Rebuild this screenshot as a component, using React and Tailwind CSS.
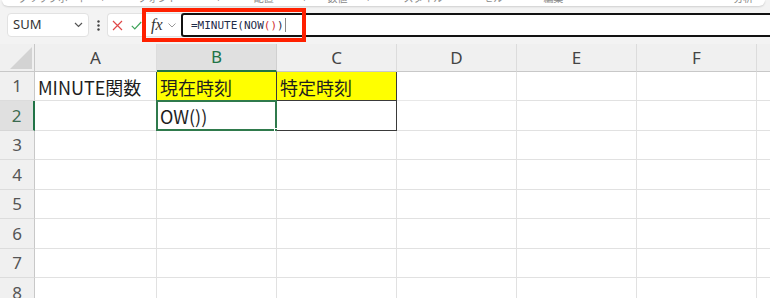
import React from "react";

const COLS = [
  { l: "A", w: 122 },
  { l: "B", w: 120 },
  { l: "C", w: 120 },
  { l: "D", w: 120 },
  { l: "E", w: 120 },
  { l: "F", w: 120 },
  { l: "G", w: 120 },
];
const ROWS = [29, 30, 29, 30, 29, 30, 29, 30];

const jp = { fontFamily: '"Noto Sans CJK JP", "Noto Sans", sans-serif' };

function cellContent(r, c) {
  if (r === 0 && c === 0) return "MINUTE関数";
  if (r === 0 && c === 1) return "現在時刻";
  if (r === 0 && c === 2) return "特定時刻";
  if (r === 1 && c === 1) return "OW())";
  return "";
}

function Cell({ r, c, w, h }) {
  const yellow = r === 0 && (c === 1 || c === 2);
  const inTable = r <= 1 && (c === 1 || c === 2);
  const leftOfTable = r <= 1 && c === 0;
  let cls = "relative flex items-center shrink-0 border-r border-b ";
  cls += yellow ? "bg-[#ffff00] " : "bg-white ";
  if (inTable) {
    cls += "border-r-[#3a3a3a] border-b-[#3a3a3a] ";
  } else if (leftOfTable) {
    cls += "border-r-[#2c5a3c] border-b-[#e1e1e1] ";
  } else if (r === 0 && c === 3) {
    cls += "border-r-[#e1e1e1] border-b-[#e8e8e8] ";
  } else {
    cls += "border-r-[#e1e1e1] border-b-[#e1e1e1] ";
  }
  const text = cellContent(r, c);
  return (
    <div className={cls} style={{ width: w, height: h }}>
      {text && (
        <span className="pl-[3px] pt-[1px] text-[18px] leading-none text-[#1e1e1e] whitespace-nowrap" style={jp}>
          {text}
        </span>
      )}
      {r === 1 && c === 1 && (
        <>
          <div className="absolute left-[-1px] top-[-1px] right-[-1px] bottom-[-1px] border-2 border-[#2f7a4c] pointer-events-none" />
          <div className="absolute right-[-4px] bottom-[-4px] w-[6px] h-[6px] bg-[#2f7a4c] border border-white" />
        </>
      )}
    </div>
  );
}

export default function App() {
  return (
    <div className="w-[770px] h-[298px] overflow-hidden bg-[#f3f3f3] relative" style={{ fontFamily: '"Noto Sans", sans-serif' }}>
      {/* ribbon remnant */}
      <div className="h-[6px] ml-[2px] mr-[5px] bg-white rounded-b-[6px] shadow-[0_1px_2px_rgba(0,0,0,0.15)] overflow-hidden flex text-[10px] leading-none text-[#888]" style={jp}>
        <span className="ml-[16px] mt-[-7px]">クリップボード</span>
        <span className="ml-[14px] mt-[-7px]">⌐</span>
        <span className="ml-[30px] mt-[-7px]">フォント</span>
        <span className="ml-[40px] mt-[-7px]">⌐</span>
        <span className="ml-[30px] mt-[-7px]">配置</span>
        <span className="ml-[30px] mt-[-7px]">⌐</span>
        <span className="ml-[18px] mt-[-7px]">数値</span>
        <span className="ml-[20px] mt-[-7px]">⌐</span>
        <span className="ml-[30px] mt-[-7px]">スタイル</span>
        <span className="ml-[40px] mt-[-7px]">セル</span>
        <span className="ml-[40px] mt-[-7px]">編集</span>
        <span className="ml-[170px] mt-[-7px]">分析</span>
      </div>

      {/* formula bar */}
      <div className="flex items-center mt-[7px] h-[24px]">
        <div className="ml-[7px] w-[82px] h-[24px] bg-white border border-[#e2e2e2] rounded-[4px] flex items-center justify-between pl-[5px] pr-[5px]">
          <span className="text-[13px] text-[#333]">SUM</span>
          <svg width="9" height="6" viewBox="0 0 9 6">
            <path d="M1 1 L4.5 4.5 L8 1" stroke="#555" strokeWidth="1.2" fill="none" />
          </svg>
        </div>
        <div className="w-[18px] flex justify-center">
          <svg width="3" height="11" viewBox="0 0 3 11">
            <circle cx="1.5" cy="1.5" r="1.2" fill="#444" />
            <circle cx="1.5" cy="5.5" r="1.2" fill="#444" />
            <circle cx="1.5" cy="9.5" r="1.2" fill="#444" />
          </svg>
        </div>
        <div className="w-[74px] h-[24px] bg-white border border-[#e2e2e2] border-r-0 rounded-l-[4px] flex items-center">
          <svg className="ml-[4px]" width="11" height="11" viewBox="0 0 11 11">
            <path d="M1 1 L10 10 M10 1 L1 10" stroke="#e04848" strokeWidth="1.2" fill="none" />
          </svg>
          <svg className="ml-[8px]" width="11" height="9" viewBox="0 0 11 9">
            <path d="M0.8 4.8 L3.8 7.8 L10.2 1" stroke="#3fa35a" strokeWidth="1.2" fill="none" />
          </svg>
          <span className="ml-[9px] text-[16px] italic leading-none text-[#333]" style={{ fontFamily: '"Liberation Serif", serif' }}>
            fx
          </span>
          <svg className="ml-[5px]" width="8" height="5" viewBox="0 0 8 5">
            <path d="M0.5 0.5 L4 4 L7.5 0.5" stroke="#999" strokeWidth="1" fill="none" />
          </svg>
        </div>
        <div className="flex-1 h-[24px] bg-white border-2 border-r-0 border-[#111] rounded-tl-[3px] rounded-bl-[3px] flex items-center pl-[8px]">
          <span className="text-[11px] text-[#1f2d4a] leading-none" style={{ fontFamily: '"DejaVu Sans Mono", "Liberation Mono", monospace' }}>
            =MINUTE(NOW<span className="text-[#d03030]">()</span>)
          </span>
          <span className="ml-[1px] w-[1px] h-[14px] bg-[#888]" />
        </div>
      </div>

      {/* red highlight overlay */}
      <div className="absolute left-[142px] top-[8px] w-[164px] h-[34px] border-4 border-[#ff2000]" />

      {/* header row */}
      <div className="flex mt-[7px] h-[28px]">
        <div className="w-[35px] shrink-0 h-[28px] bg-[#f0f0f0] border-r border-b border-[#c8c8c8] flex items-end justify-end pr-[2px] pb-[2px]">
          <svg width="22" height="22" viewBox="0 0 22 22">
            <path d="M22 0 L22 22 L0 22 Z" fill="#d3d3d3" />
          </svg>
        </div>
        {COLS.map((c, i) => (
          <div
            key={c.l}
            className={
              "shrink-0 h-[28px] flex items-center justify-center text-[17px] " +
              (i === 1
                ? "bg-[#e0e0e0] text-[#217346] border-r border-r-[#d0d0d0] border-b-2 border-b-[#217346]"
                : "bg-[#f0f0f0] text-[#444] border-r border-r-[#dcdcdc] border-b border-b-[#c8c8c8]")
            }
            style={{ width: c.w }}
          >
            {c.l}
          </div>
        ))}
      </div>

      {/* rows */}
      {ROWS.map((h, r) => (
        <div key={r} className="flex">
          <div
            className={
              "w-[35px] shrink-0 flex items-center justify-center text-[17px] border-b " +
              (r === 1
                ? "bg-[#e0e0e0] text-[#3d6b50] border-r-2 border-r-[#217346] border-b-[#d6d6d6]"
                : "bg-[#f0f0f0] text-[#555] border-r border-r-[#c8c8c8] border-b-[#dcdcdc]")
            }
            style={{ height: h }}
          >
            {r + 1}
          </div>
          {COLS.map((c, ci) => (
            <Cell key={ci} r={r} c={ci} w={c.w} h={h} />
          ))}
        </div>
      ))}
    </div>
  );
}
